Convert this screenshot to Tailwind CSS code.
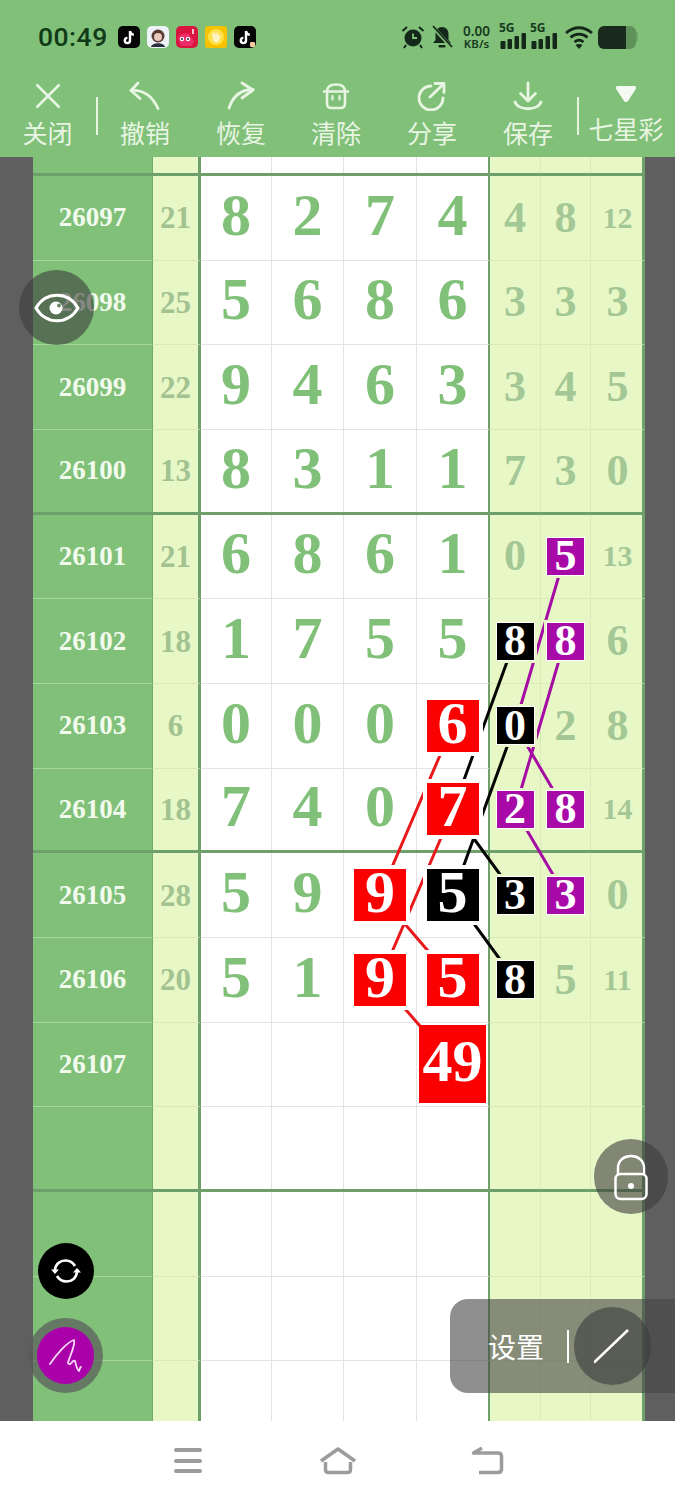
<!DOCTYPE html>
<html lang="zh-CN">
  <head>
    <meta charset="UTF-8" />
    <meta name="viewport" content="width=device-width, initial-scale=1.0" />
    <title>七星彩</title>
    <script src="https://cdn.jsdelivr.net/npm/@tailwindcss/browser@4"></script>
  </head>
  <body class="bg-white">
    <div class="relative w-[675px] h-[1500px] overflow-hidden flex flex-col font-['Noto_Sans_CJK_SC',sans-serif]">
      <!-- status bar + toolbar -->
      <header class="h-[157px] shrink-0 bg-[#80c078] flex flex-col">
        <div class="h-[68px] shrink-0 flex items-center pl-[38px] pr-[37px] pt-[6px] text-[#12301a]">
          <span class="text-[26.500px] font-medium tracking-[0.5px] font-['Roboto',sans-serif] text-[#103a18] w-[80px]">00:49</span>
          <div class="flex gap-[7px]">
            <svg class="w-[22px] h-[22px]" viewBox="0 0 22 22"><rect width="22" height="22" rx="5" fill="#050505" /><path d="M12 5v9.500a2.600 2.600 0 1 1-2.600-2.600M12 5c.3 2.200 1.700 3.500 3.800 3.700" fill="none" stroke="#fff" stroke-width="2.400" /></svg>
            <svg class="w-[22px] h-[22px]" viewBox="0 0 22 22"><rect width="22" height="22" rx="5" fill="#eef3f8" /><circle cx="11" cy="10" r="6.500" fill="#5a3a36" /><circle cx="11" cy="11" r="4" fill="#e9c8bc" /><path d="M4 21c1-5 13-5 14 0z" fill="#2b2f3d" /></svg>
            <svg class="w-[22px] h-[22px]" viewBox="0 0 22 22"><rect width="22" height="22" rx="5" fill="#d9143f" /><path d="M2 13c0-5 7-7 11-5l5 7-2 5H5z" fill="#ee2c68" /><circle cx="6" cy="13" r="2.200" fill="#fff" /><circle cx="12" cy="13" r="2.200" fill="#fff" /><circle cx="6" cy="13" r="1" fill="#222" /><circle cx="12" cy="13" r="1" fill="#222" /><path d="M17 3v5" stroke="#fff" stroke-width="1.500" /></svg>
            <svg class="w-[22px] h-[22px]" viewBox="0 0 22 22"><rect width="22" height="22" rx="3" fill="#f7c300" /><circle cx="11" cy="11" r="8" fill="#ffe14a" /><path d="M7 8l1 6c1 3 5 3 6 1l2-6-2 1-1-4-1 3-1-4-1 4-1-3z" fill="#fff3c8" /></svg>
            <svg class="w-[22px] h-[22px]" viewBox="0 0 22 22"><rect width="22" height="22" rx="5" fill="#050505" /><path d="M12 5v9.500a2.600 2.600 0 1 1-2.600-2.600M12 5c.3 2.200 1.700 3.500 3.800 3.700" fill="none" stroke="#fff" stroke-width="2.400" /><rect x="16" y="16" width="5" height="5" rx="1" fill="#f2c9a0" /></svg>
          </div>
          <div class="ml-auto flex items-center">
            <!-- alarm -->
            <svg class="w-[24px] h-[24px]" viewBox="0 0 24 24" fill="none"><circle cx="12" cy="13" r="8.500" fill="#14281a" /><path d="M12 8.500V13h4" stroke="#80c078" stroke-width="1.800" /><path d="M1.500 6L6 2M22.500 6L18 2M5 20l-2 3M19 20l2 3" stroke="#14281a" stroke-width="2" /></svg>
            <!-- muted bell -->
            <svg class="w-[22px] h-[24px] ml-[6px]" viewBox="0 0 22 24" fill="none"><path d="M11 2c4 0 6.500 3 6.500 7v6l2.500 3H2l2.500-3V9c0-4 2.500-7 6.500-7z" fill="#14281a" /><rect x="7.500" y="20" width="7" height="2.500" rx="1" fill="#14281a" /><path d="M1.500 1.500L21 23" stroke="#80c078" stroke-width="3.500" /><path d="M2 1L21 22" stroke="#14281a" stroke-width="1.800" /></svg>
            <div class="w-[31px] ml-[8px] flex flex-col items-center font-['Noto_Sans',sans-serif] font-semibold text-[#163a1e]">
              <span class="block text-[13.500px] leading-[13px]">0.00</span>
              <span class="block text-[11.500px] leading-[11px]">KB/s</span>
            </div>
            <div class="relative w-[27px] h-[24px] ml-[8px]">
              <span class="absolute -left-[1px] -top-[3px] text-[12px] font-bold leading-[12px] font-['Noto_Sans',sans-serif] text-[#163a1e]">5G</span>
              <svg class="absolute inset-0 w-[27px] h-[24px]" viewBox="0 0 27 24" fill="#14281a"><rect x="0.500" y="16" width="5" height="8" rx="1" /><rect x="7.500" y="14" width="4.500" height="10" rx="1" /><rect x="14.500" y="11" width="4.500" height="13" rx="1" /><rect x="21.500" y="8" width="4.500" height="16" rx="1" /></svg>
            </div>
            <div class="relative w-[27px] h-[24px] ml-[4px]">
              <span class="absolute -left-[1px] -top-[3px] text-[12px] font-bold leading-[12px] font-['Noto_Sans',sans-serif] text-[#163a1e]">5G</span>
              <svg class="absolute inset-0 w-[27px] h-[24px]" viewBox="0 0 27 24" fill="#14281a"><rect x="0.500" y="16" width="5" height="8" rx="1" /><rect x="7.500" y="14" width="4.500" height="10" rx="1" /><rect x="14.500" y="11" width="4.500" height="13" rx="1" /><rect x="21.500" y="8" width="4.500" height="16" rx="1" /></svg>
            </div>
            <!-- wifi -->
            <svg class="w-[28px] h-[24px] ml-[7px]" viewBox="0 0 28 24" fill="none" stroke="#14281a" stroke-width="2.800"><path d="M1 8c8-7 18-7 26 0" /><path d="M5.500 12.500c5-4.500 12-4.500 17 0" /><path d="M9.500 17c3-2.500 6-2.500 9 0" /><path d="M14 24l-3.500-4c2-1.300 5-1.300 7 0z" fill="#14281a" stroke="none" /></svg>
            <!-- battery -->
            <div class="flex w-[40px] h-[23px] ml-[5px]">
              <div class="w-[28px] bg-[#1a2a1c] rounded-l-[6px]"></div>
              <div class="w-[10px] bg-[#5f9259] rounded-r-[6px]"></div>
              <div class="w-[2px] h-[10px] my-auto bg-[#6ea368] rounded-r-[2px]"></div>
            </div>
          </div>
        </div>
        <nav class="relative flex-1 text-[#e8f5e3] text-[25px] leading-[30px]">
          <div class="absolute left-[96px] top-[29px] w-[2px] h-[38px] bg-[#e8f5e3]"></div>
          <div class="absolute left-[577px] top-[29px] w-[2px] h-[38px] bg-[#e8f5e3]"></div>
          <div class="flex h-full">
            <button class="w-[95px] flex flex-col items-center">
              <svg class="w-[28px] h-[28px] mt-[14px] mb-[7px]" viewBox="0 0 28 28" fill="none" stroke="#e8f5e3" stroke-width="2.600"><path d="M2.500 2.500l23 23M25.500 2.500l-23 23" /></svg>
              <span>关闭</span>
            </button>
            <button class="w-[100px] flex flex-col items-center">
              <svg class="w-[32px] h-[30px] mt-[13px] mb-[6px]" viewBox="0 0 32 30" fill="none" stroke="#e8f5e3" stroke-width="2.800" stroke-linecap="round" stroke-linejoin="round"><path d="M9 2L2 9.500l9 8" /><path d="M2 9.500c12-1 21 5 27 18" /></svg>
              <span>撤销</span>
            </button>
            <button class="w-[92px] flex flex-col items-center">
              <svg class="w-[32px] h-[30px] mt-[13px] mb-[6px]" viewBox="0 0 32 30" fill="none" stroke="#e8f5e3" stroke-width="2.800" stroke-linecap="round" stroke-linejoin="round"><path d="M17 2l11 7-11 8" /><path d="M28 8.500C16 8.500 8 15 4 27" /></svg>
              <span>恢复</span>
            </button>
            <button class="w-[98px] flex flex-col items-center">
              <svg class="w-[28px] h-[28px] mt-[14px] mb-[7px]" viewBox="0 0 28 28" fill="none" stroke="#e8f5e3" stroke-width="2.600" stroke-linecap="round" stroke-linejoin="round"><path d="M2 9.500h24" /><path d="M5 9.500C5 5 8 2.500 14 2.500s9 2.500 9 7" /><path d="M5 9.500v12c0 3 1.500 4.500 4.500 4.500h9c3 0 4.500-1.500 4.500-4.500v-12" /><path d="M10.500 14v3.500M17.500 14v3.500" stroke-width="2.200" /></svg>
              <span>清除</span>
            </button>
            <button class="w-[94px] flex flex-col items-center">
              <svg class="w-[32px] h-[30px] mt-[13px] mb-[6px]" viewBox="0 0 32 30" fill="none" stroke="#e8f5e3" stroke-width="2.800" stroke-linecap="round" stroke-linejoin="round"><path d="M15 5A12 12 0 1 0 27 17" /><path d="M14 16L27.500 3" /><path d="M19 2.500h9v9" /></svg>
              <span>分享</span>
            </button>
            <button class="w-[98px] flex flex-col items-center">
              <svg class="w-[30px] h-[30px] mt-[13px] mb-[6px]" viewBox="0 0 30 30" fill="none" stroke="#e8f5e3" stroke-width="2.800" stroke-linecap="round" stroke-linejoin="round"><path d="M15 2v17" /><path d="M7.500 12.500L15 20l7.500-7.500" /><path d="M2 21c3 9 23 9 26 0" /></svg>
              <span>保存</span>
            </button>
            <button class="w-[98px] flex flex-col items-center">
              <svg class="w-[22px] h-[18px] mt-[17px] mb-[10px]" viewBox="0 0 22 18" fill="#f4faf1"><path d="M3 1h16c2 0 2.800 1.500 1.800 3L13 16c-1 1.300-3 1.300-4 0L1.200 4C.2 2.500 1 1 3 1z" /></svg>
              <span class="whitespace-nowrap">七星彩</span>
            </button>
          </div>
        </nav>
      </header>

      <!-- draw sheet -->
      <main class="relative h-[1264px] shrink-0 overflow-hidden bg-[#5f5f5f] pl-[33px] pr-[30px] font-['Liberation_Serif',serif] font-bold">
        <div id="sheet" class="w-[612px]"></div>

        <!-- connecting strokes between the marked numbers -->
        <svg class="absolute left-0 top-0 w-[675px] h-[1264px]" viewBox="0 157 675 1264" fill="none" stroke-width="3">
          <g stroke="#a40ca4">
            <path d="M565 555L515 725L565 810" />
            <path d="M565 640L515 810L565 895" />
          </g>
          <g stroke="#050505">
            <path d="M515 640L453 810L515 895" />
            <path d="M515 725L453 895L515 980" />
          </g>
          <g stroke="#e8181c">
            <path d="M453 725L380 895L453 980" />
            <path d="M453 810L380 980L453 1064" />
          </g>
        </svg>

        <!-- floating round buttons -->
        <button class="absolute left-[19px] top-[113px] w-[75px] h-[75px] rounded-full bg-[#3c3c3c]/60 z-20 flex items-center justify-center">
          <svg class="w-[46px] h-[32px]" viewBox="0 0 46 32" fill="none"><path d="M2 16C12 -1 34 -1 44 16C34 33 12 33 2 16Z" stroke="#fff" stroke-width="3" /><circle cx="22" cy="16" r="6.500" fill="#fff" /><circle cx="25" cy="13.500" r="2" fill="#6b8a68" /></svg>
        </button>
        <button class="absolute left-[38px] top-[1086px] w-[56px] h-[56px] rounded-full bg-black z-20 flex items-center justify-center">
          <svg class="w-[32px] h-[28px]" viewBox="0 0 32 28" fill="none" stroke="#fff" stroke-width="2.600"><path d="M5 13C5.500 7 10 3.500 15.500 3.500c4 0 7.500 2 9.500 5.500" /><path d="M27 15c-.5 6-5 9.500-10.500 9.500-4 0-7.500-2-9.500-5.500" /><path d="M1 12.500h8L5 17zM31 15.500h-8l4-4.500z" fill="#fff" stroke="none" /></svg>
        </button>
        <button class="absolute left-[28px] top-[1161px] w-[75px] h-[75px] rounded-full bg-[#5a5a5a]/70 z-20 flex items-center justify-center">
          <span class="w-[57px] h-[57px] rounded-full bg-[#aa00aa] flex items-center justify-center">
            <svg class="w-[36px] h-[38px]" viewBox="0 0 36 38" fill="none" stroke="#f8d8f8" stroke-width="1.800" stroke-linecap="round" stroke-linejoin="round"><path d="M2 27C8 18 19 5 26 3C28 8 21 20 20 26C23 30 24 22 27 24C28 28 29 33 31 34C32 32 32 30 33 30" /></svg>
          </span>
        </button>
        <button class="absolute left-[594px] top-[982px] w-[74px] h-[75px] rounded-full bg-[#3c3c3c]/60 z-20 flex items-center justify-center">
          <svg class="w-[36px] h-[48px]" viewBox="0 0 36 48" fill="none" stroke="#fff" stroke-width="2.500"><path d="M5 22V15C5 -1 31 -1 31 15V22" /><rect x="2.500" y="21" width="31" height="25" rx="5" /><circle cx="18" cy="33" r="3" fill="#fff" stroke="none" /></svg>
        </button>

        <!-- settings pill -->
        <div class="absolute left-[450px] top-[1142px] w-[240px] h-[94px] rounded-[18px] bg-[#444444]/60 z-20 flex items-center font-['Noto_Sans_CJK_SC',sans-serif] font-normal text-white">
          <span class="ml-[38px] text-[28px] leading-none">设置</span>
          <span class="ml-[23px] w-[2px] h-[33px] bg-white"></span>
          <span class="ml-[5px] w-[77px] h-[78px] rounded-full bg-[#3c3c3c]/60 flex items-center justify-center">
            <svg class="w-[38px] h-[36px]" viewBox="0 0 38 36" fill="none" stroke="#fff" stroke-width="2.500"><path d="M0 34.500L34 2" /></svg>
          </span>
        </div>
      </main>

      <!-- navigation bar -->
      <footer class="flex-1 bg-white relative">
        <div class="absolute left-[174px] top-[27px] w-[28px] flex flex-col gap-[6.500px]">
          <span class="h-[4px] rounded-full bg-[#9c9c9c]"></span>
          <span class="h-[4px] rounded-full bg-[#9c9c9c]"></span>
          <span class="h-[4px] rounded-full bg-[#9c9c9c]"></span>
        </div>
        <svg class="absolute left-[319px] top-[25px] w-[38px] h-[30px]" viewBox="0 0 38 30" fill="none" stroke="#9c9c9c" stroke-width="3.500" stroke-linejoin="round"><path d="M2 15L19 3L36 15" /><path d="M6.500 16V23.500C6.500 25.500 7.500 26.500 9.500 26.500H28.500C30.500 26.500 31.500 25.500 31.500 23.500V16" /></svg>
        <svg class="absolute left-[471px] top-[25px] w-[33px] h-[30px]" viewBox="0 0 33 30" fill="none" stroke="#9c9c9c" stroke-width="3.500" stroke-linejoin="round"><path d="M11 2L2.500 7H27C29.500 7 30.500 8 30.500 10.500V23C30.500 25.500 29.500 26.500 27 26.500H8" /></svg>
      </footer>
    </div>

    <script>
      // [issue, sum, d1..d4, r1..r3]; a cell like "r6" is a marked number
      var rows = [
        ["26097", "21", "8", "2", "7", "4", "4", "8", "12"],
        ["26098", "25", "5", "6", "8", "6", "3", "3", "3"],
        ["26099", "22", "9", "4", "6", "3", "3", "4", "5"],
        ["26100", "13", "8", "3", "1", "1", "7", "3", "0"],
        ["26101", "21", "6", "8", "6", "1", "0", "p5", "13"],
        ["26102", "18", "1", "7", "5", "5", "k8", "p8", "6"],
        ["26103", "6", "0", "0", "0", "r6", "k0", "2", "8"],
        ["26104", "18", "7", "4", "0", "r7", "p2", "p8", "14"],
        ["26105", "28", "5", "9", "r9", "K5", "k3", "p3", "0"],
        ["26106", "20", "5", "1", "r9", "r5", "k8", "5", "11"],
        ["26107", "", "", "", "", "R49", "", "", ""],
        ["", "", "", "", "", "", "", "", ""],
        ["", "", "", "", "", "", "", "", ""],
        ["", "", "", "", "", "", "", "", ""],
        ["", "", "", "", "", "", "", "", ""]
      ];

      var widths = ["w-[120px]", "w-[48px]", "w-[71px]", "w-[72px]", "w-[73px]", "w-[73px]", "w-[51px]", "w-[50px]", "w-[54px]"];

      function cellClass(i, v) {
        if (i === 0) return "bg-[#80c078] border-r border-r-[#6fa869] text-[#f2faee] text-[27px]";
        if (i === 1) return "bg-[#e8f7c6] border-r-[3px] border-r-[#6f9f6a] text-[#a2c391] text-[31px]";
        if (i === 5) return "bg-white border-r-[2px] border-r-[#6f9f6a] text-[#80c078] text-[60px]";
        if (i < 5) return "bg-white border-r border-r-[#e4e4e4] text-[#80c078] text-[60px]";
        if (i === 8 && v.length === 2) return "bg-[#e8f7c6] border-r-[3px] border-r-[#6f9f6a] text-[#a4c796] text-[30px] pl-[2px]";
        if (i === 8) return "bg-[#e8f7c6] border-r-[3px] border-r-[#6f9f6a] text-[#a4c796] text-[44px] pl-[2px]";
        return "bg-[#e8f7c6] border-r border-r-[#d9ebb8] text-[#a4c796] text-[44px]";
      }

      function rowBorder(i) {
        if (i === 0) return "border-[#a6d8a0]";
        if (i === 1) return "border-[#d9ebb8]";
        if (i < 6) return "border-[#e4e4e4]";
        return "border-[#d9ebb8]";
      }

      function badge(code) {
        var kind = code[0], text = code.slice(1);
        var big = '<span class="block pb-[6px]">' + text + "</span>";
        if (kind === "R") return '<span class="relative z-10 w-[67px] h-[78px] bg-[#fa0000] text-white text-[60px] flex items-center justify-center">' + big + "</span>";
        if (kind === "r") return '<span class="relative z-10 w-[52px] h-[52px] bg-[#fa0000] ring-[4px] ring-white text-white text-[60px] flex items-center justify-center">' + big + "</span>";
        if (kind === "K") return '<span class="relative z-10 w-[52px] h-[52px] bg-black ring-[4px] ring-white text-white text-[60px] flex items-center justify-center">' + big + "</span>";
        if (kind === "k") return '<span class="relative z-10 w-[37px] h-[37px] bg-black shadow-[0_0_0_1px_#ffffff,0_0_0_3px_#e8f7c6] text-white text-[44px] flex items-center justify-center">' + text + "</span>";
        return '<span class="relative z-10 w-[37px] h-[37px] bg-[#a80aa8] shadow-[0_0_0_1px_#ffffff,0_0_0_3px_#e8f7c6] text-white text-[44px] flex items-center justify-center">' + text + "</span>";
      }

      function plain(v, i) {
        // the four draw columns use a taller face that sits a little above centre
        if (i >= 2 && i <= 5 && v) return '<span class="block pb-[6px]">' + v + "</span>";
        return v;
      }

      function buildRow(values, r) {
        var thick = r % 4 === 3;
        var html = '<div class="flex h-[84.670px] ' + (thick ? "border-b-[3px] border-[#6f9f6a]" : "") + '">';
        values.forEach(function (v, i) {
          var marked = /^[rkpRK]/.test(v);
          html += '<div class="' + widths[i] + " " + cellClass(i, v) + " " + (thick ? "" : "border-b " + rowBorder(i)) + ' flex items-center justify-center leading-none">' + (marked ? badge(v) : plain(v, i)) + "</div>";
        });
        return html + "</div>";
      }

      // the partly scrolled row above the first issue
      var headRow = '<div class="flex h-[19px] border-b-[3px] border-[#6f9f6a]">';
      ["", "", "", "", "", "", "", "", ""].forEach(function (v, i) {
        headRow += '<div class="' + widths[i] + " " + cellClass(i, v) + '"></div>';
      });
      headRow += "</div>";

      document.getElementById("sheet").innerHTML = headRow + rows.map(buildRow).join("");
    </script>
  </body>
</html>
